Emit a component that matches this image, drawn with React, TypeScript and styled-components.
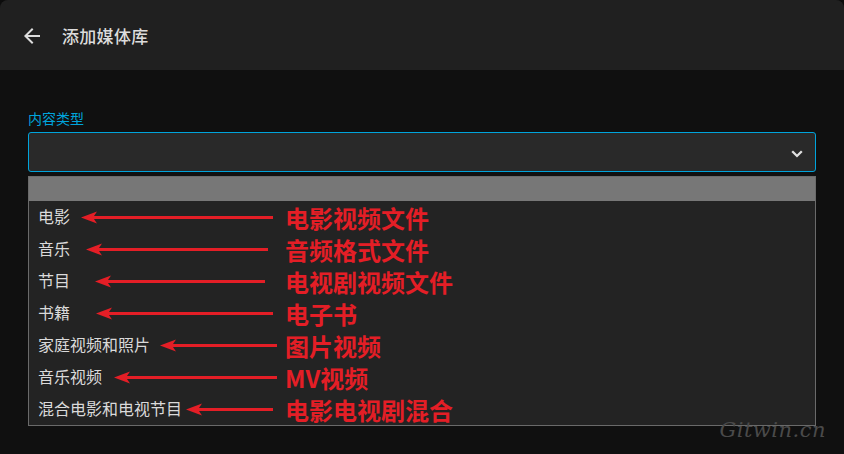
import styled, { createGlobalStyle } from "styled-components"

const GlobalStyle = createGlobalStyle`
  html, body {
    margin: 0;
    padding: 0;
    background: #0c0c0c;
  }
  body {
    font-family: "Noto Sans CJK SC", "Noto Sans", sans-serif;
  }
`

type Option = {
  label: string
  note: string
  gap: number
  end: number
}

const options: Option[] = [
  { label: "电影", note: "电影视频文件", gap: 11, end: 12 },
  { label: "音乐", note: "音频格式文件", gap: 16, end: 17 },
  { label: "节目", note: "电视剧视频文件", gap: 25, end: 20 },
  { label: "书籍", note: "电子书", gap: 26, end: 12 },
  { label: "家庭视频和照片", note: "图片视频", gap: 10, end: 8 },
  { label: "音乐视频", note: "MV视频", gap: 12, end: 8 },
  { label: "混合电影和电视节目", note: "电影电视剧混合", gap: 4, end: 12 },
]

export default function App() {
  return (
    <>
      <GlobalStyle />
      <Page>
        <Header>
          <BackButton aria-label="back">
            <svg width="24" height="24" viewBox="0 0 24 24">
              <path
                fill="#dcdcdc"
                d="M20 11H7.83l5.59-5.59L12 4l-8 8 8 8 1.41-1.41L7.83 13H20v-2z"
              />
            </svg>
          </BackButton>
          <Title>添加媒体库</Title>
        </Header>
        <Content>
          <FieldLabel>内容类型</FieldLabel>
          <Select>
            <svg width="16" height="16" viewBox="0 0 24 24">
              <path
                fill="none"
                stroke="#e0e0e0"
                strokeWidth="3.4"
                strokeLinecap="square"
                d="M6 9l6 6 6-6"
              />
            </svg>
          </Select>
          <Dropdown>
            <Highlight />
            {options.map(o => (
              <Row key={o.label}>
                <Lead>
                  <ItemText>{o.label}</ItemText>
                  <Arrow $gap={o.gap} $end={o.end}>
                    <svg width="16" height="13" viewBox="0 0 16 13">
                      <polygon fill="#e41e26" points="0,6.5 16,0.5 12,6.5 16,12.5" />
                    </svg>
                    <Shaft />
                  </Arrow>
                </Lead>
                <Note>{o.note}</Note>
              </Row>
            ))}
          </Dropdown>
        </Content>
        <Watermark>Gitwin.cn</Watermark>
      </Page>
    </>
  )
}

const Page = styled.div`
  position: relative;
  height: 454px;
  background: #101010;
  border-radius: 8px 8px 0 0;
  overflow: hidden;
`

const Header = styled.header`
  display: flex;
  align-items: center;
  height: 70px;
  padding-left: 20px;
  box-sizing: border-box;
  background: #202020;
`

const BackButton = styled.div`
  display: flex;
  width: 24px;
  height: 24px;
  margin-top: 1px;
`

const Title = styled.h1`
  margin: 0 0 0 18px;
  font-size: 17px;
  font-weight: 500;
  color: #dcdcdc;
  letter-spacing: 0.3px;
`

const Content = styled.main`
  display: flex;
  flex-direction: column;
  padding: 38px 28px 0;
`

const FieldLabel = styled.label`
  font-size: 14px;
  line-height: 20px;
  color: #00a4dc;
  height: 24px;
`

const Select = styled.div`
  display: flex;
  align-items: center;
  justify-content: flex-end;
  height: 40px;
  box-sizing: border-box;
  padding-right: 10px;
  padding-top: 4px;
  border: 1px solid #00a4dc;
  border-radius: 3px;
  background: #292929;
`

const Dropdown = styled.div`
  display: flex;
  flex-direction: column;
  margin-top: 4px;
  height: 250px;
  box-sizing: border-box;
  border: 1px solid #6a6a6a;
  background: #232323;
`

const Highlight = styled.div`
  height: 24px;
  background: #777777;
`

const Row = styled.div`
  display: grid;
  grid-template-columns: 247px auto;
  align-items: center;
  height: 32px;
  padding-left: 9px;
`

const Lead = styled.div`
  display: flex;
  align-items: center;
  margin-top: -2px;
`

const ItemText = styled.span`
  font-size: 16px;
  color: #dadada;
  white-space: nowrap;
`

const Arrow = styled.div<{ $gap: number; $end: number }>`
  flex: 1;
  display: flex;
  align-items: center;
  margin-left: ${p => p.$gap}px;
  margin-right: ${p => p.$end}px;
  margin-top: 3px;

  svg {
    flex-shrink: 0;
  }
`

const Shaft = styled.div`
  flex: 1;
  height: 3px;
  margin-left: -4px;
  background: #e41e26;
`

const Note = styled.span`
  font-size: 24px;
  line-height: 28px;
  font-weight: 700;
  color: #e41e26;
  white-space: nowrap;
  margin-top: 2px;
`

const Watermark = styled.div`
  position: absolute;
  right: 18px;
  bottom: 12px;
  font-family: "DejaVu Serif", serif;
  font-style: italic;
  font-weight: 300;
  font-size: 21px;
  letter-spacing: 0.5px;
  color: #4a4a4a;
`
